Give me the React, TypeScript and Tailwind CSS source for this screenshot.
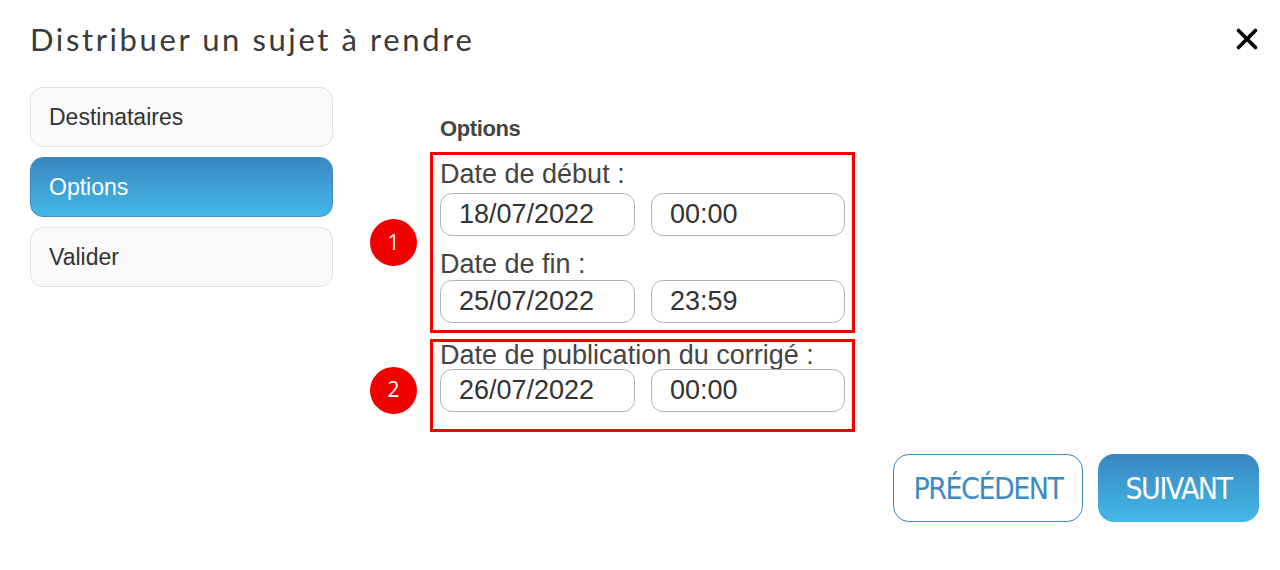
import { X } from 'lucide-react';

const tabs = ['Destinataires', 'Options', 'Valider'];

function Field({ value }: { value: string }) {
  return (
    <div className="h-[43px] rounded-[12px] border border-[#b3b3b3] bg-white pl-[18px] flex items-center text-[27px] text-[#333] leading-none">
      {value}
    </div>
  );
}

function DateRow({ date, time }: { date: string; time: string }) {
  return (
    <div className="grid grid-cols-[195px_194px] gap-x-[16px]">
      <Field value={date} />
      <Field value={time} />
    </div>
  );
}

function Badge({ n }: { n: number }) {
  return (
    <div className="w-[47px] h-[47px] rounded-full bg-[#f00000] text-white flex items-center justify-center text-[21px] font-['Open_Sans',sans-serif]">
      {n}
    </div>
  );
}

export default function App() {
  return (
    <div className="w-[1280px] h-[570px] bg-white pl-[30px] pr-[21px] font-['Liberation_Sans',Arial,sans-serif] text-[#333]">
      {/* Header */}
      <div className="flex items-center justify-between h-[80px] pb-[2px]">
        <h1 className="font-['Lato',sans-serif] text-[31px] tracking-[2.6px] text-[#3a3a3a]">
          Distribuer un sujet à rendre
        </h1>
        <X size={34} strokeWidth={2.6} className="text-black mr-[-5px]" />
      </div>

      <div className="flex mt-[7px]">
        {/* Steps */}
        <div className="w-[303px] flex flex-col gap-[10px]">
          {tabs.map((t) => (
            <div
              key={t}
              className={
                t === 'Options'
                  ? 'h-[60px] rounded-[13px] border border-[#3a8bc3] bg-gradient-to-b from-[#3a87c0] to-[#42b8e6] text-white flex items-center pl-[18px] text-[23px]'
                  : 'h-[60px] rounded-[13px] border border-[#e0e0e0] bg-[#fafafa] text-[#333] flex items-center pl-[18px] text-[23px]'
              }
            >
              {t}
            </div>
          ))}
        </div>

        {/* Options */}
        <div className="ml-[37px] mt-[30px]">
          <div className="ml-[70px] text-[22px] font-bold text-[#444] leading-[24px] tracking-[-0.4px]">Options</div>

          <div className="flex items-center gap-[13px] mt-[11px]">
            <Badge n={1} />
            <div className="w-[425px] border-[3px] border-[#f00000] px-[7px] pt-[2px] pb-[7px] text-[#444]">
              <div className="text-[27px] leading-[31px] mt-[2px]">Date de début :</div>
              <div className="mt-[3px]">
                <DateRow date="18/07/2022" time="00:00" />
              </div>
              <div className="text-[27px] leading-[31px] mt-[13px]">Date de fin :</div>
              <div>
                <DateRow date="25/07/2022" time="23:59" />
              </div>
            </div>
          </div>

          <div className="flex items-center gap-[13px] mt-[6px]">
            <div className="mt-[9px]">
              <Badge n={2} />
            </div>
            <div className="w-[425px] border-[3px] border-[#f00000] px-[7px] pt-0 pb-[17px] text-[#444]">
              <div className="text-[27px] leading-[27px]">Date de publication du corrigé :</div>
              <div>
                <DateRow date="26/07/2022" time="00:00" />
              </div>
            </div>
          </div>
        </div>
      </div>

      {/* Footer buttons */}
      <div className="flex justify-end gap-[15px] mt-[22px]">
        <button className="w-[190px] h-[68px] rounded-[16px] border-[1.5px] border-[#3a8ac4] bg-white text-[#3a8ac4] text-[30px] font-['DejaVu_Sans_Condensed','DejaVu_Sans',sans-serif] font-light tracking-[-1.5px]">
          PRÉCÉDENT
        </button>
        <button className="w-[161px] h-[68px] rounded-[16px] bg-gradient-to-b from-[#3a87c0] to-[#42b8e6] text-white text-[30px] font-['DejaVu_Sans_Condensed','DejaVu_Sans',sans-serif] font-light tracking-[-1.5px]">
          SUIVANT
        </button>
      </div>
    </div>
  );
}
